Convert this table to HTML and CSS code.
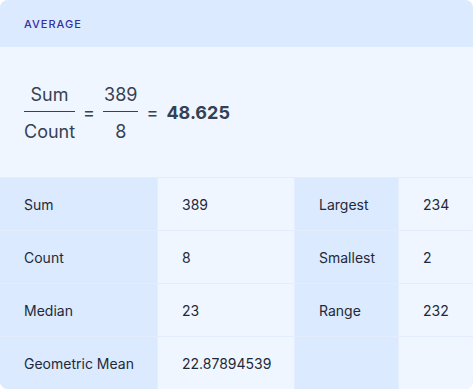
FILE: index.html
```html
<!DOCTYPE html>
<html>
<head>
<meta charset="utf-8">
<link rel="stylesheet" href="styles.css">
</head>
<body>
<div class="card">
  <div class="header">Average</div>
  <div class="formula">
    <div class="frac"><span class="num">Sum</span><span class="den">Count</span></div>
    <span class="eq">=</span>
    <div class="frac"><span class="num">389</span><span class="den">8</span></div>
    <span class="eq">=</span>
    <span class="result">48.625</span>
  </div>
  <div class="grid">
    <div class="cell label">Sum</div><div class="cell value">389</div><div class="cell label">Largest</div><div class="cell value">234</div>
    <div class="cell label">Count</div><div class="cell value">8</div><div class="cell label">Smallest</div><div class="cell value">2</div>
    <div class="cell label">Median</div><div class="cell value">23</div><div class="cell label">Range</div><div class="cell value">232</div>
    <div class="cell label">Geometric Mean</div><div class="cell value">22.87894539</div><div class="cell label"></div><div class="cell value"></div>
  </div>
</div>
</body>
</html>
```
FILE: styles.css
```css
html, body { margin: 0; padding: 0; background: #ffffff; }
.card {
  width: 473px;
  height: 389px;
  border-radius: 8px;
  overflow: hidden;
  background: #eff6ff;
  font-family: Inter, "Noto Sans", sans-serif;
}
.header {
  height: 47px;
  box-sizing: border-box;
  background: #dbeafe;
  padding: 0 24px;
  display: flex;
  align-items: center;
  font-size: 11px;
  font-weight: 500;
  letter-spacing: 0.09em;
  text-transform: uppercase;
  color: #3730a3;
}
.formula {
  height: 130px;
  box-sizing: border-box;
  padding: 2px 24px 0;
  display: flex;
  align-items: center;
  gap: 8px;
  font-size: 18px;
  color: #374151;
}
.frac {
  display: flex;
  flex-direction: column;
  align-items: stretch;
  text-align: center;
}
.frac .num {
  line-height: 24px;
  padding: 0 1px 4px;
  border-bottom: 1px solid #374151;
}
.frac .den {
  line-height: 24px;
  padding-top: 8px;
}
.eq { line-height: 24px; }
.result {
  font-weight: 700;
  color: #334155;
  line-height: 24px;
}
.grid {
  display: grid;
  grid-template-columns: 157px 136px 103px 74px;
  grid-auto-rows: 52px;
  gap: 1px;
  border-top: 1px solid #e3edfd;
  background: #e3edfd;
}
.cell {
  display: flex;
  align-items: center;
  padding: 0 24px;
  font-size: 14px;
  color: #1f2937;
  white-space: nowrap;
}
.label { background: #dbeafe; }
.value { background: #eff6ff; }
```
